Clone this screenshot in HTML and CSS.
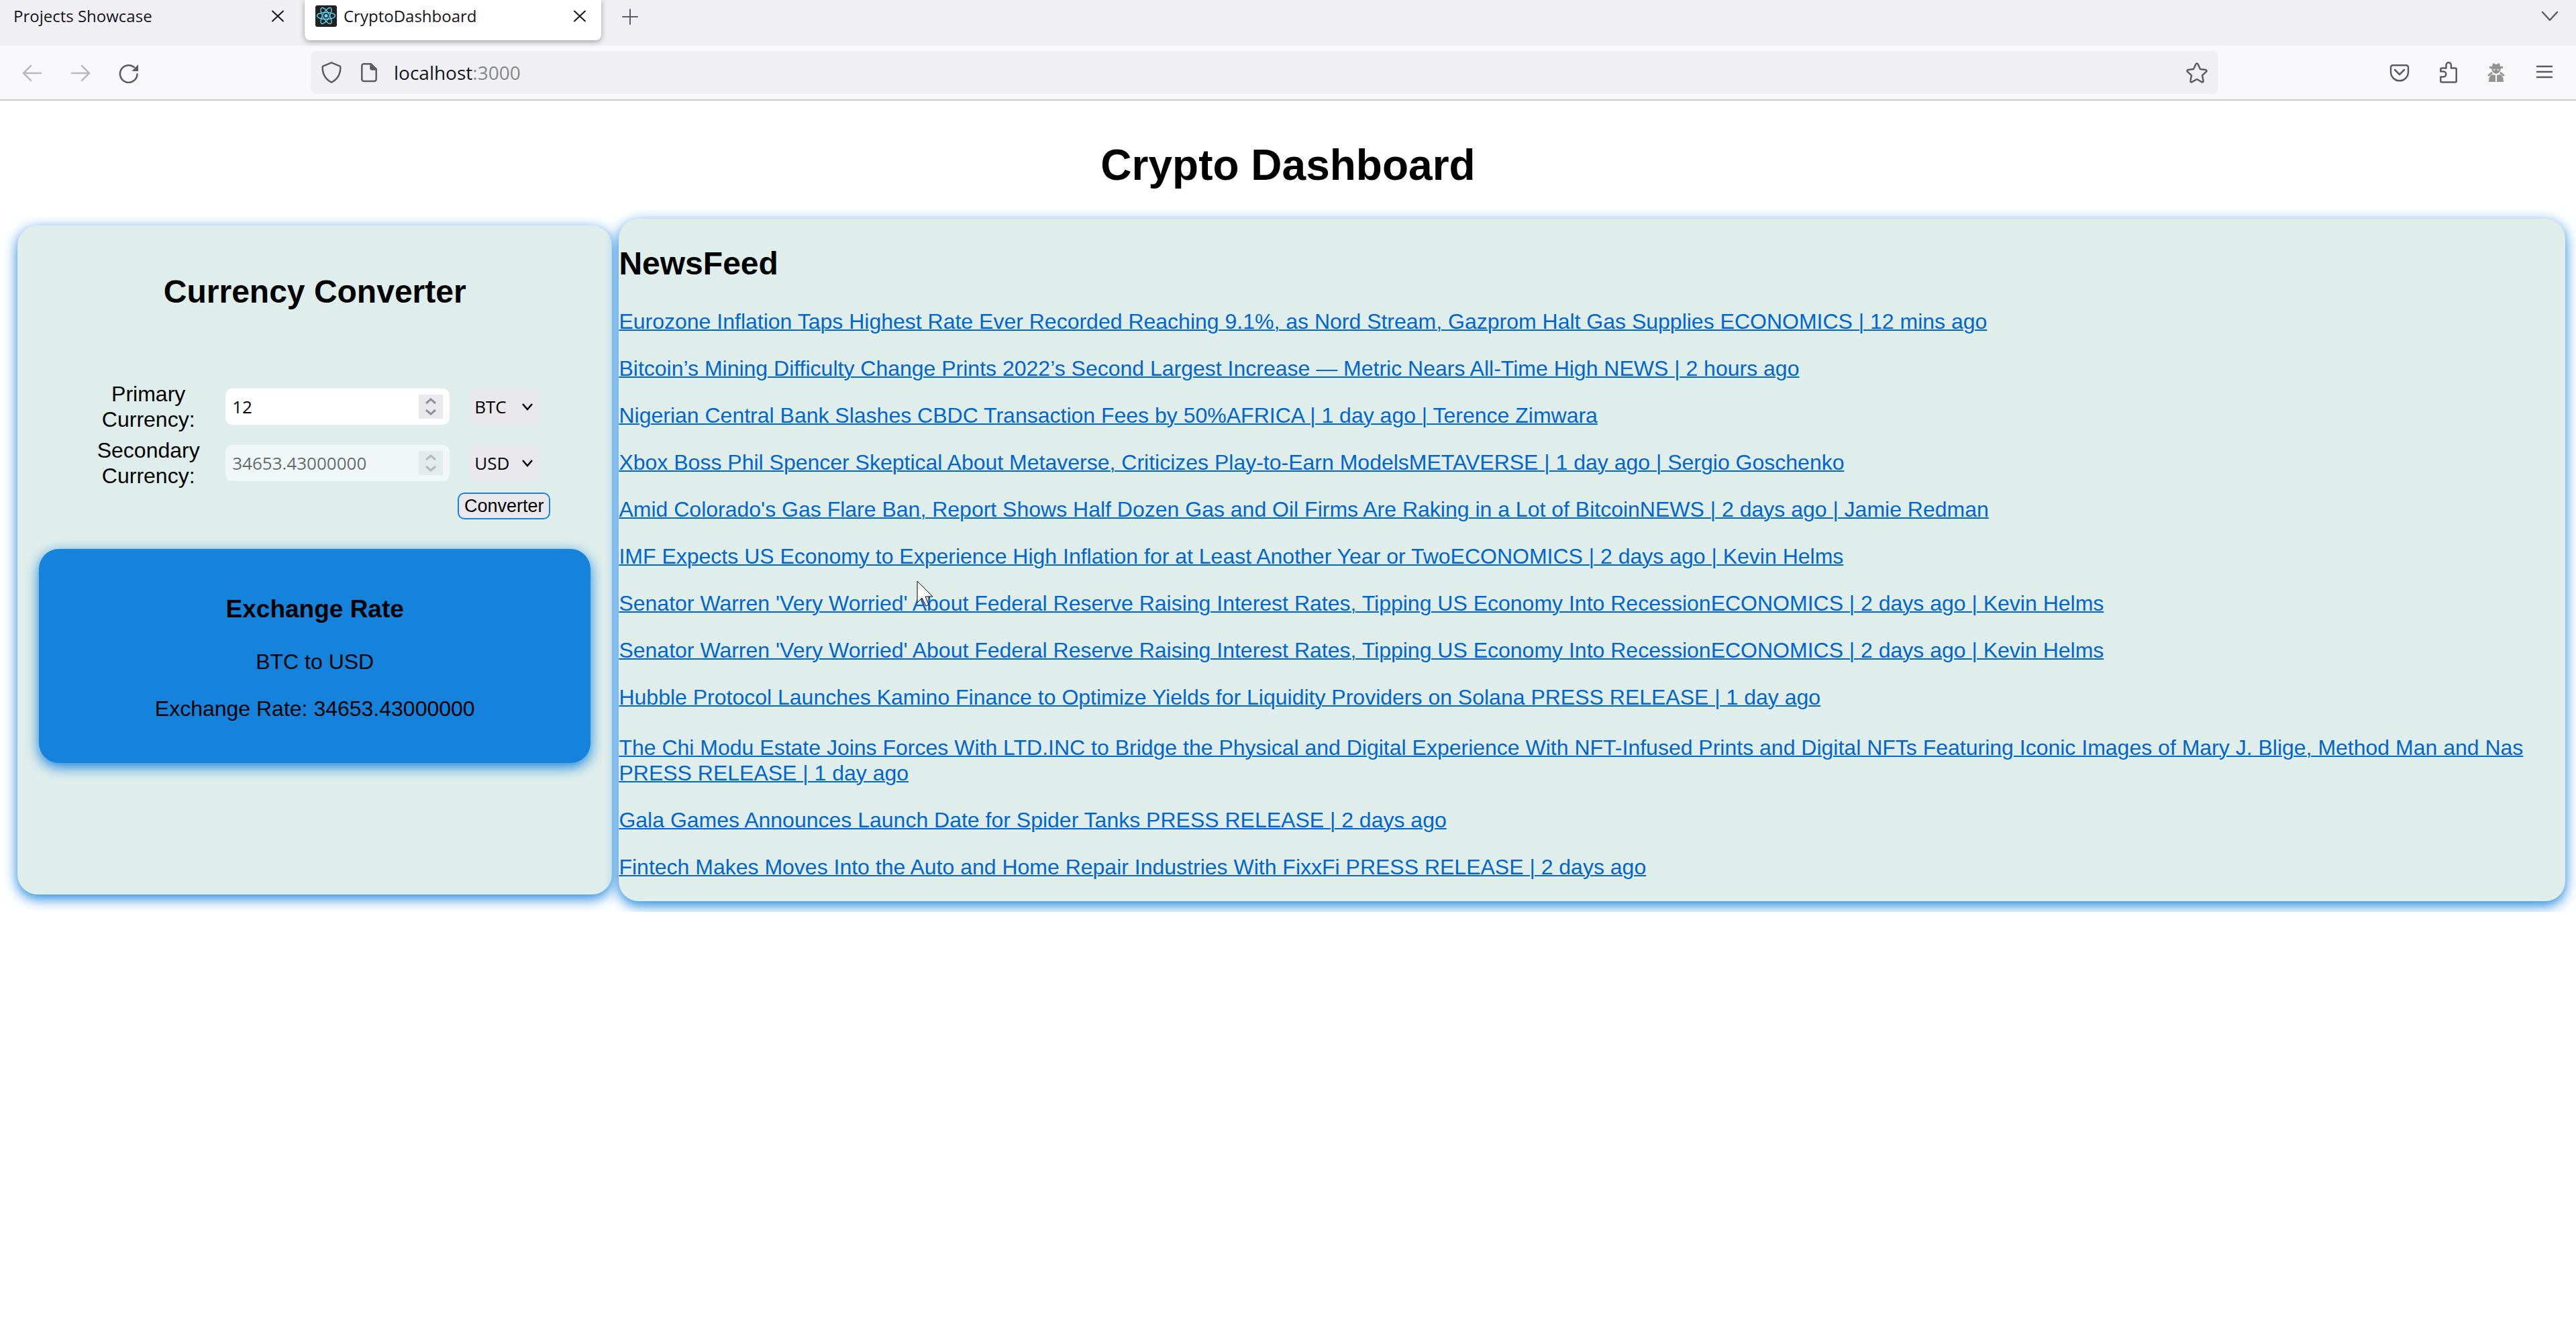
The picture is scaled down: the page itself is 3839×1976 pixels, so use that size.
FILE: index.html
```html
<!DOCTYPE html>
<html lang="en">
<head>
<meta charset="utf-8">
<title>CryptoDashboard</title>
<link rel="stylesheet" href="styles.css">
</head>
<body>
<header class="browser">
  <div class="tabs">
    <div class="tab">
      <span class="tab-title">Projects Showcase</span>
      <button class="icon-btn" aria-label="Close tab"><svg class="icon" viewBox="0 0 32 32"><path d="M8 8.500l16 15M24 8.500l-16 15" stroke="#15141a" stroke-width="2"/></svg></button>
    </div>
    <div class="tab tab-active">
      <svg class="favicon" viewBox="0 0 32 32"><rect width="32" height="32" rx="3" fill="#222"/><g fill="none" stroke="#61dafb" stroke-width="1.300"><ellipse cx="16" cy="15.500" rx="13.500" ry="5"/><ellipse cx="16" cy="15.500" rx="13.500" ry="5" transform="rotate(60 16 15.500)"/><ellipse cx="16" cy="15.500" rx="13.500" ry="5" transform="rotate(120 16 15.500)"/></g><circle cx="16" cy="15.500" r="2.600" fill="#61dafb"/></svg>
      <span class="tab-title">CryptoDashboard</span>
      <button class="icon-btn" aria-label="Close tab"><svg class="icon" viewBox="0 0 32 32"><path d="M8 8.500l16 15M24 8.500l-16 15" stroke="#15141a" stroke-width="2"/></svg></button>
    </div>
    <button class="icon-btn new-tab" aria-label="New tab"><svg class="icon" viewBox="0 0 32 32"><path d="M16 6v22M5 17h22" stroke-width="2"/></svg></button>
    <button class="icon-btn list-tabs" aria-label="List all tabs"><svg class="icon" viewBox="0 0 32 32"><path d="M5 10l11 12 11-12"/></svg></button>
  </div>
  <div class="toolbar">
    <nav class="nav-buttons">
      <button class="icon-btn faded" aria-label="Back"><svg class="icon" viewBox="0 0 32 32"><path d="M30 17H4M15 6L4 17l11 11"/></svg></button>
      <button class="icon-btn faded" aria-label="Forward"><svg class="icon" viewBox="0 0 32 32"><path d="M4 17h26M19 6l11 11-11 11"/></svg></button>
      <button class="icon-btn" aria-label="Reload"><svg class="icon" viewBox="0 0 32 32"><path d="M29.500 18.500A12.800 12.800 0 1 1 25 8.300"/><path d="M31 4v10H21.500z" fill="#5b5b66" stroke="none"/></svg></button>
    </nav>
    <div class="url-bar">
      <svg class="icon" viewBox="0 0 32 32"><path d="M15 1.300l12 5a1.700 1.700 0 0 1 1.300 1.700c.200 10-4.300 18-13.300 22.700C6 26 1.500 18 1.700 8A1.700 1.700 0 0 1 3 6.300z"/></svg>
      <svg class="icon" viewBox="0 0 32 32"><path d="M9 3.300h11l7.700 7.700v15a3 3 0 0 1-3 3H9.300a3 3 0 0 1-3-3V6a2.700 2.700 0 0 1 2.700-2.700z"/><path d="M19.500 3.300l8.200 8.200h-6.500a1.700 1.700 0 0 1-1.700-1.700z" fill="#5b5b66"/></svg>
      <span class="url">localhost<span class="port">:3000</span></span>
      <svg class="icon" viewBox="0 0 32 32"><path d="M14.500 3.500a1.700 1.700 0 0 1 3 0l3.500 7.500 8 1a1.600 1.600 0 0 1 1 2.800l-6 5.500 1.600 8a1.600 1.600 0 0 1-2.400 1.800L16 26l-7.200 4.100a1.600 1.600 0 0 1-2.400-1.800l1.600-8-6-5.500a1.600 1.600 0 0 1 1-2.800l8-1z"/></svg>
    </div>
    <div class="tools">
      <button class="icon-btn" aria-label="Save to Pocket"><svg class="icon" viewBox="0 0 32 32"><path d="M6 5.300h20a3 3 0 0 1 3 3v7a13 13 0 0 1-26 0v-7a3 3 0 0 1 3-3zM9 12l7 7 7-7"/></svg></button>
      <button class="icon-btn" aria-label="Extensions"><svg class="icon" viewBox="0 0 32 32"><path d="M13.500 9.500V5a3.700 3.700 0 0 1 7.400 0v4.500h5.800a2 2 0 0 1 2 2v17a2 2 0 0 1-2 2H7.300a2 2 0 0 1-2-2v-6h4a4 4 0 0 0 0-8h-4v-3a2 2 0 0 1 2-2z"/></svg></button>
      <button class="icon-btn" aria-label="Privacy extension"><svg class="icon" viewBox="0 0 32 32"><g fill="#939393" stroke="none"><path d="M11 2l5 2 5-2 1 5h4v3H6V7h4z"/><path d="M9 10h14c0 4-3 7-7 8-4-1-7-4-7-8z"/><path d="M3 20l6-5 2 2-6 5zM29 20l-6-5-2 2 6 5z"/><path d="M15 20v10H5c0-5 1-9 5-11zM17 20v10h10c0-5-1-9-5-11z"/></g><path d="M12 12h2M18 12h2" stroke="#f9f9fb" stroke-width="1.500"/></svg></button>
      <button class="icon-btn" aria-label="Open menu"><svg class="icon" viewBox="0 0 32 32"><path d="M5 7h22M5 15h22M5 23h22"/></svg></button>
    </div>
  </div>
</header>

<main class="page">
  <h1>Crypto Dashboard</h1>
  <div class="dashboard">
    <section class="card converter">
      <h2>Currency Converter</h2>
      <form class="convert-form">
        <label for="primary">Primary<br>Currency:</label>
        <div class="amount">
          <input id="primary" type="text" inputmode="decimal" value="12">
          <svg class="spinner" viewBox="0 0 36 36"><path d="M11 13l7-6 7 6M11 23l7 6 7-6"/></svg>
        </div>
        <div class="select">
          <select aria-label="Primary currency code"><option>BTC</option></select>
          <svg class="chevron" viewBox="0 0 16 12"><path d="M1 2l7 8 7-8"/></svg>
        </div>
        <label for="secondary">Secondary<br>Currency:</label>
        <div class="amount amount-disabled">
          <input id="secondary" type="text" value="34653.43000000" disabled>
          <svg class="spinner" viewBox="0 0 36 36"><path d="M11 13l7-6 7 6M11 23l7 6 7-6"/></svg>
        </div>
        <div class="select">
          <select aria-label="Secondary currency code"><option>USD</option></select>
          <svg class="chevron" viewBox="0 0 16 12"><path d="M1 2l7 8 7-8"/></svg>
        </div>
        <button class="convert-btn" type="button">Converter</button>
      </form>
      <div class="rate">
        <h3>Exchange Rate</h3>
        <p>BTC to USD</p>
        <p>Exchange Rate: 34653.43000000</p>
      </div>
    </section>
    <section class="card news">
      <h2>NewsFeed</h2>
      <p><a href="#">Eurozone Inflation Taps Highest Rate Ever Recorded Reaching 9.1%, as Nord Stream, Gazprom Halt Gas Supplies ECONOMICS | 12 mins ago</a></p>
      <p><a href="#">Bitcoin’s Mining Difficulty Change Prints 2022’s Second Largest Increase — Metric Nears All-Time High NEWS | 2 hours ago</a></p>
      <p><a href="#">Nigerian Central Bank Slashes CBDC Transaction Fees by 50%AFRICA | 1 day ago | Terence Zimwara</a></p>
      <p><a href="#">Xbox Boss Phil Spencer Skeptical About Metaverse, Criticizes Play-to-Earn ModelsMETAVERSE | 1 day ago | Sergio Goschenko</a></p>
      <p><a href="#">Amid Colorado's Gas Flare Ban, Report Shows Half Dozen Gas and Oil Firms Are Raking in a Lot of BitcoinNEWS | 2 days ago | Jamie Redman</a></p>
      <p><a href="#">IMF Expects US Economy to Experience High Inflation for at Least Another Year or TwoECONOMICS | 2 days ago | Kevin Helms</a></p>
      <p><a href="#">Senator Warren 'Very Worried' About Federal Reserve Raising Interest Rates, Tipping US Economy Into RecessionECONOMICS | 2 days ago | Kevin Helms</a></p>
      <p><a href="#">Senator Warren 'Very Worried' About Federal Reserve Raising Interest Rates, Tipping US Economy Into RecessionECONOMICS | 2 days ago | Kevin Helms</a></p>
      <p><a href="#">Hubble Protocol Launches Kamino Finance to Optimize Yields for Liquidity Providers on Solana PRESS RELEASE | 1 day ago</a></p>
      <p class="long"><a href="#">The Chi Modu Estate Joins Forces With LTD.INC to Bridge the Physical and Digital Experience With NFT-Infused Prints and Digital NFTs Featuring Iconic Images of Mary J. Blige, Method Man and Nas PRESS RELEASE | 1 day ago</a></p>
      <p><a href="#">Gala Games Announces Launch Date for Spider Tanks PRESS RELEASE | 2 days ago</a></p>
      <p><a href="#">Fintech Makes Moves Into the Auto and Home Repair Industries With FixxFi PRESS RELEASE | 2 days ago</a></p>
    </section>
  </div>
</main>
<svg class="cursor" viewBox="0 0 26 40"><path d="M1 1v32l7-7 6 12 4-2-5-12h11z" fill="#fff" stroke="#000"/></svg>
</body>
</html>
```
FILE: styles.css
```css
* {
  box-sizing: border-box;
}

body {
  margin: 0;
  background: #fff;
  color: #000;
  font: 32px/38px "Liberation Sans", Arial, sans-serif;
}

button,
input,
select {
  margin: 0;
  padding: 0;
  border: 0;
  background: none;
  color: inherit;
  font: inherit;
}

/* Browser window */
.browser {
  border-bottom: 2px solid #cccccc;
  background: #f9f9fb;
  color: #15141a;
  font-family: "Open Sans", "Noto Sans", sans-serif;
}

.icon,
.favicon {
  display: block;
  flex: none;
  width: 32px;
  height: 32px;
}

.icon {
  fill: none;
  stroke: #5b5b66;
  stroke-width: 2.5;
  stroke-linecap: round;
  stroke-linejoin: round;
}

.icon-btn {
  flex: none;
}

.faded {
  opacity: 0.4;
}

.tabs {
  display: flex;
  align-items: flex-start;
  height: 68px;
  background: #f0f0f4;
}

.tab {
  display: flex;
  align-items: center;
  gap: 10px;
  width: 442px;
  height: 60px;
  padding: 0 16px 12px;
  border-radius: 0 0 8px 8px;
  font-size: 24px;
}

.tab:first-child {
  width: 454px;
  padding: 0 24px 12px 20px;
}

.tab-active {
  background: #fff;
  box-shadow: 0 2px 8px rgba(0, 0, 0, 0.35);
}

.tab-title {
  flex: 1;
}

.new-tab {
  margin: 8px 0 0 27px;
}

.list-tabs {
  margin: 8px 23px 0 auto;
}

.toolbar {
  display: flex;
  align-items: center;
  height: 80px;
  padding: 0 31px;
}

.nav-buttons {
  display: flex;
  gap: 40px;
  width: 432px;
}

.url-bar {
  display: flex;
  flex: 1;
  align-items: center;
  gap: 22px;
  height: 64px;
  padding: 0 16px;
  border-radius: 8px;
  background: #f0f0f4;
  font-size: 28px;
}

.url {
  flex: 1;
}

.port {
  color: #85858c;
}

.tools {
  display: flex;
  justify-content: flex-end;
  gap: 40px;
  width: 502px;
}

/* Dashboard */
.page {
  padding: 16px;
}

h1,
h2,
h3,
p {
  margin: 0;
}

h1 {
  margin: 43px 0;
  font-size: 64px;
  line-height: 74px;
  text-align: center;
}

h2 {
  font-size: 48px;
  line-height: 54px;
}

h3 {
  font-size: 37px;
  line-height: 42px;
}

.dashboard {
  display: grid;
  grid-template-columns: 5fr 16fr;
}

.card,
.rate {
  border-radius: 30px;
  box-shadow: 0 6px 20px #1582dc;
}

.card {
  background: #e0eeeb;
}

.converter {
  margin: 10px;
  padding: 72px 32px 0;
  text-align: center;
}

.convert-form {
  display: grid;
  grid-template-columns: 206px 358px 138px;
  row-gap: 4px;
  align-items: center;
  justify-content: center;
  justify-items: center;
  margin-top: 104px;
}

.convert-form label {
  padding: 2px 0;
}

.amount {
  display: flex;
  align-items: center;
  width: 334px;
  height: 54px;
  padding: 0 10px;
  border-radius: 10px;
  background: #fff;
  font: 26px "Open Sans", "Noto Sans", sans-serif;
}

.amount input {
  flex: 1;
  min-width: 0;
}

.amount-disabled {
  opacity: 0.55;
}

.spinner {
  width: 36px;
  height: 36px;
  background: #e9e9ed;
  fill: none;
  stroke: #8f8f9d;
  stroke-width: 3;
}

.select {
  display: grid;
  align-items: center;
  width: 106px;
  height: 54px;
  border-radius: 10px;
  background: #e9e9ed;
  font: 26px "Open Sans", "Noto Sans", sans-serif;
}

.select select,
.chevron {
  grid-area: 1 / 1;
}

.select select {
  width: 100%;
  height: 100%;
  padding-left: 9px;
  appearance: none;
}

.chevron {
  justify-self: end;
  width: 16px;
  height: 12px;
  margin-right: 10px;
  fill: none;
  stroke: #000;
  stroke-width: 2.5;
  pointer-events: none;
}

.convert-btn {
  grid-column: 3;
  width: 138px;
  height: 40px;
  border: 2px solid #1582dc;
  border-radius: 10px;
  background: #e9e9ed;
  font-size: 27px;
  line-height: 36px;
}

.rate {
  margin-top: 44px;
  padding: 69px 32px 62px;
  background: #1582dc;
}

.rate h3 {
  margin-bottom: 38px;
}

.rate p + p,
.news p + p {
  margin-top: 32px;
}

.news {
  padding: 40px 0 32px;
}

.news h2 {
  margin-bottom: 40px;
}

.news p + .long {
  margin-top: 37px;
}

.news a {
  color: #0066cc;
  text-decoration-thickness: 2px;
}

.cursor {
  position: absolute;
  top: 865px;
  left: 1366px;
  width: 26px;
  height: 40px;
}
```
